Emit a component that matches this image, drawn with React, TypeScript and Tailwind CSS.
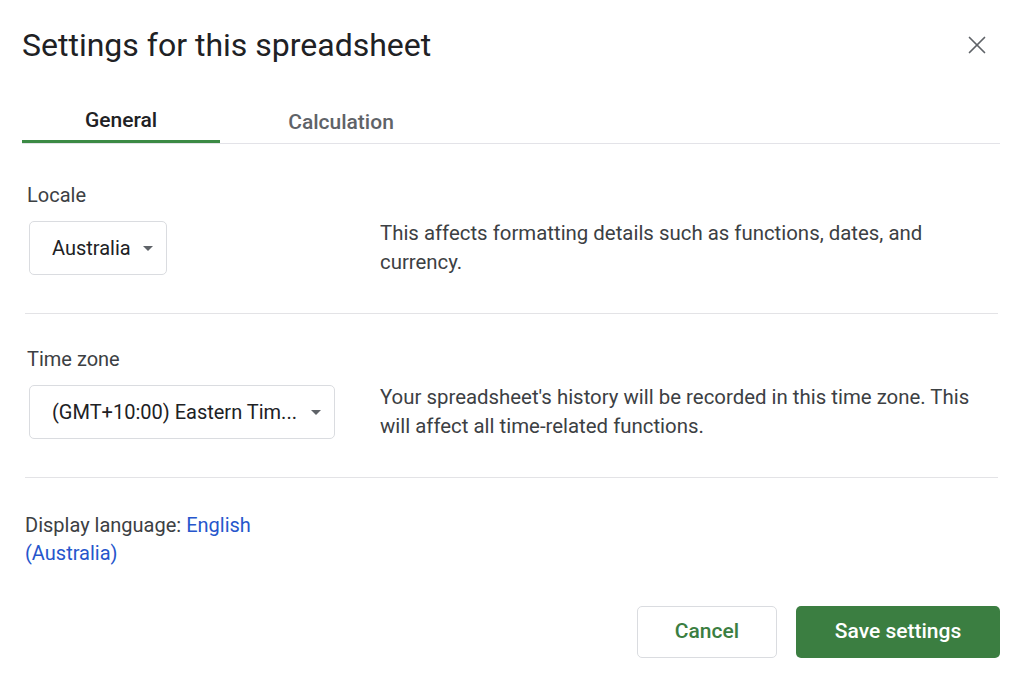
import { X } from "lucide-react";

function Select({ label, width }: { label: string; width: string }) {
  return (
    <div
      className={`flex h-[54px] ${width} items-center justify-between rounded-[5px] border border-[#dadce0] bg-white pl-[22px] pr-[13px] text-[20px] text-[#202124]`}
    >
      <span className="truncate whitespace-nowrap">{label}</span>
      <svg width="10" height="5" viewBox="0 0 10 5" className="ml-3 shrink-0">
        <path d="M0 0h10L5 5z" fill="#5f6368" />
      </svg>
    </div>
  );
}

function Section({
  label,
  select,
  width,
  lines,
  top,
}: {
  label: string;
  select: string;
  width: string;
  lines: string[];
  top: string;
}) {
  return (
    <section className={`flex flex-col pb-[36px] ${top}`}>
      <p className="pl-[2px] text-[20px] leading-[28px] text-[#3c4043]">{label}</p>
      <div className="mt-[10px] flex items-center">
        <div className="w-[355px] shrink-0 pl-[4px]">
          <Select label={select} width={width} />
        </div>
        <div className="text-[20.4px] leading-[29px] text-[#3c4043]">
          {lines.map((line) => (
            <span key={line} className="block whitespace-nowrap">
              {line}
            </span>
          ))}
        </div>
      </div>
    </section>
  );
}

export default function App() {
  return (
    <div
      className="h-[682px] w-[1024px] overflow-hidden bg-white pl-[22px] pr-[24px]"
      style={{ fontFamily: "Roboto, 'Open Sans', Arial, sans-serif" }}
    >
      <header className="flex items-start justify-between pt-[26px]">
        <h1 className="text-[32px] leading-[38px] text-[#202124]">
          Settings for this spreadsheet
        </h1>
        <button className="mr-[8px] mt-[4px] text-[#5f6368]">
          <X size={30} strokeWidth={1.35} />
        </button>
      </header>

      <nav className="mt-[29px] flex border-b border-[#e3e3e8]">
        <div className="flex h-[50px] w-[198px] items-center justify-center border-b-[3px] border-[#3b8a44] pt-[9px] text-[21px] font-medium text-[#202124]">
          General
        </div>
        <div className="flex h-[50px] w-[242px] items-center justify-center pt-[9px] text-[21px] font-medium text-[#5f6368]">
          Calculation
        </div>
      </nav>

      <div className="ml-[3px] mr-[2px] divide-y divide-[#e3e3e6]">
        <Section
          top="pt-[37px]"
          label="Locale"
          select="Australia"
          width="w-[138px]"
          lines={["This affects formatting details such as functions, dates, and", "currency."]}
        />
        <Section
          top="pt-[31px]"
          label="Time zone"
          select="(GMT+10:00) Eastern Tim..."
          width="w-[306px]"
          lines={[
            "Your spreadsheet's history will be recorded in this time zone. This",
            "will affect all time-related functions.",
          ]}
        />
        <div className="pt-[33px] text-[20px] leading-[28px] text-[#3c4043]">
          <span className="block">
            Display language: <span className="text-[#2656cc]">English</span>
          </span>
          <span className="block text-[#2656cc]">(Australia)</span>
        </div>
      </div>

      <footer className="mt-[39px] flex justify-end gap-[19px]">
        <button className="h-[52px] w-[140px] rounded-[5px] border border-[#dadce0] bg-white text-[21px] font-medium text-[#3b7e41]">
          Cancel
        </button>
        <button className="h-[52px] w-[204px] rounded-[5px] bg-[#3b7e41] text-[21px] font-medium text-white">
          Save settings
        </button>
      </footer>
    </div>
  );
}
